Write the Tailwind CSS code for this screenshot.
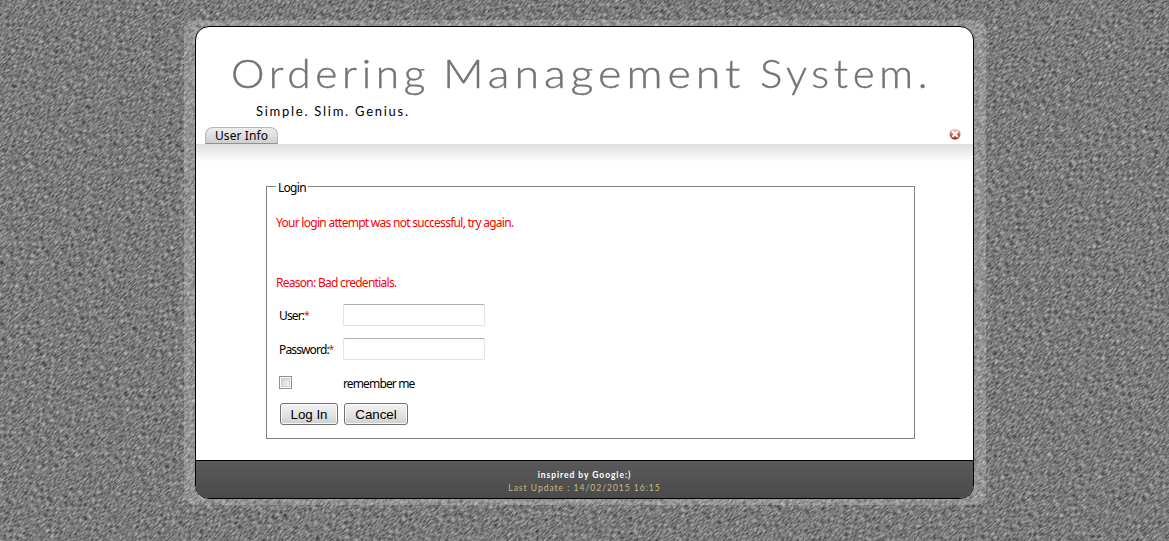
<!DOCTYPE html>
<html lang="en">
<head>
<meta charset="utf-8">
<title>Ordering Management System</title>
<script src="https://cdn.jsdelivr.net/npm/@tailwindcss/browser@4"></script>
</head>
<body class="relative h-[541px] w-[1169px] overflow-hidden bg-[#7a7a7a] font-['Noto_Sans',sans-serif] text-[12px] text-black">
<svg class="absolute inset-0" width="1169" height="541" aria-hidden="true">
  <filter id="stone" x="0" y="0" width="100%" height="100%" color-interpolation-filters="sRGB">
    <feTurbulence type="fractalNoise" baseFrequency="0.22 0.72" numOctaves="2" seed="4"/>
    <feColorMatrix values="0.8 0 0 0 0.08  0.8 0 0 0 0.08  0.8 0 0 0 0.08  0 0 0 0 1"/>
  </filter>
  <g transform="rotate(-42 584 270)"><rect x="-200" y="-400" width="1600" height="1350" filter="url(#stone)"/></g>
</svg>
<div class="relative ml-[184px] pt-[20px]">
<div class="h-[485px] w-[802px] rounded-[10px] bg-white/20 px-[11px] pt-[6px]">
<main class="flex h-[473px] w-[779px] flex-col overflow-hidden rounded-[14px] border border-black bg-white">
  <header class="flex h-[117px] flex-col">
    <h1 class="flex h-[66px] items-end whitespace-nowrap pl-[35px] font-['Lato',sans-serif] text-[40px] leading-[40px] font-light text-[#747474] [-webkit-text-stroke:0.4px_#747474]">
      <span class="w-[212px]"><span class="inline-block origin-left scale-x-[1.06] tracking-[4.4px]">Ordering</span></span><span class="w-[317px]"><span class="inline-block origin-left scale-x-[1.12] tracking-[4.4px]">Management</span></span><span class="inline-block origin-left scale-x-[1.05] tracking-[4.4px]">System.</span>
    </h1>
    <p class="mt-[9px] pl-[60px] font-['Lato',sans-serif] text-[13px] leading-[18px] tracking-[1.74px]">Simple. Slim. Genius.</p>
    <nav class="mt-auto flex h-[18px] items-end justify-between pl-[9px] pr-[12px]">
      <a class="flex h-[17px] w-[73px] items-center justify-center rounded-t-[8px] border border-[#b5b5b5] border-b-[#929292] bg-linear-to-b from-[#eee] to-[#cfcfcf] text-[12px] leading-[16px] tracking-[0.1px]">User Info</a>
      <svg class="mb-[4px]" width="12" height="12" viewBox="0 0 12 12"><defs><linearGradient id="r" x2="0" y2="1"><stop offset="0" stop-color="#f9e8df"/><stop offset=".5" stop-color="#d0695a"/><stop offset="1" stop-color="#971a16"/></linearGradient></defs><circle cx="6" cy="6" r="5.5" fill="url(#r)"/><path d="M3.2 3.4 8.8 9M8.8 3.4 3.2 9" stroke="#fff" stroke-width="2.2"/></svg>
    </nav>
  </header>
  <section class="flex-1 bg-linear-to-b from-[#dedede] via-white via-[18px] to-white pl-[70px] pt-[34px]">
    <fieldset class="h-[261px] w-[649px] border border-[#848484] px-[9px] tracking-[-0.72px]">
      <legend class="h-[16px] px-[2px] pt-[2px] leading-[16px]">Login</legend>
      <p class="mt-[20px] h-[60px] leading-[18px] text-[#f00]">Your login attempt was not successful, try again.</p>
      <p class="h-[30px] leading-[18px] text-[#f00]">Reason: Bad credentials.</p>
      <form class="pl-[3px]">
        <div class="grid grid-cols-[64px_142px] gap-y-[12px] leading-[22px] tracking-[-0.86px]">
          <label class="h-[22px] pt-px" for="u">User:<span class="align-[1px] text-[10px] leading-none text-[#f00]">*</span></label><input id="u" class="h-[22px] w-[142px] rounded-[2px] border border-[#dfe3ea] border-t-[#abadb3]">
          <label class="h-[22px] pt-px" for="p">Password:<span class="align-[1px] text-[10px] leading-none text-[#f00]">*</span></label><input id="p" type="password" class="h-[22px] w-[142px] rounded-[2px] border border-[#dfe3ea] border-t-[#abadb3]">
          <div class="h-[22px] pt-[4px]"><div class="h-[13px] w-[13px] border border-[#8e8f8f] bg-white p-px"><div class="h-[9px] w-[9px] border border-[#cbcfd5] bg-linear-to-br from-[#cbcfd5] to-[#f6f6f6]"></div></div></div><span class="h-[22px] pt-px">remember me</span>
        </div>
        <div class="mt-[9px] flex gap-[6px] pl-px font-['Liberation_Sans',sans-serif] text-[13.33px] tracking-normal">
          <button type="button" class="h-[22px] w-[58px] rounded-[3px] border border-[#707070] bg-linear-to-b from-[#f2f2f2] from-0% via-[#e4e4e4] via-50% to-[#cfcfcf] leading-[21px] inset-ring inset-ring-white/80">Log In</button>
          <button type="button" class="h-[22px] w-[64px] rounded-[3px] border border-[#707070] bg-linear-to-b from-[#f2f2f2] from-0% via-[#e4e4e4] via-50% to-[#cfcfcf] leading-[21px] inset-ring inset-ring-white/80">Cancel</button>
        </div>
      </form>
    </fieldset>
  </section>
  <footer class="h-[38px] border-t border-black bg-linear-to-b from-[#5a5a5a] to-[#4a4a4a] pt-[8px] text-center font-['Lato',sans-serif] text-[8.5px] leading-[13px]">
    <p class="font-bold tracking-[0.95px] text-white">inspired by Google:)</p>
    <p class="tracking-[1px] text-[#c8bb85]">Last Update : 14/02/2015 16:15</p>
  </footer>
</main>
</div>
</div>
</body>
</html>
